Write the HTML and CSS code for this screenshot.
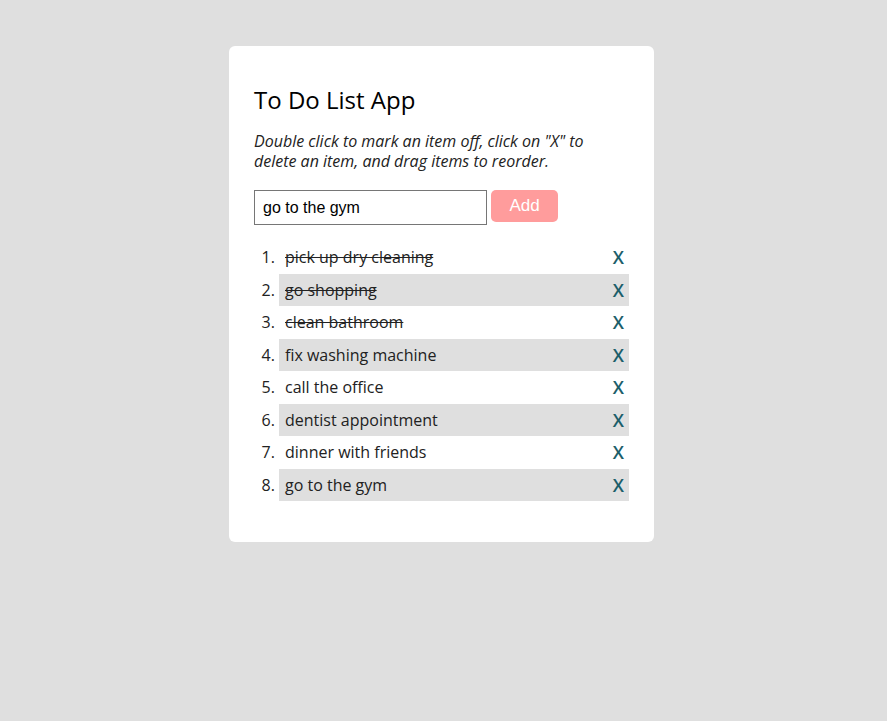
FILE: index.html
```html
<!DOCTYPE html>
<html>
<head>
<meta charset="utf-8">
<link rel="stylesheet" href="styles.css">
</head>
<body>
<div class="card">
  <h2 class="title">To Do List App</h2>
  <p class="desc">Double click to mark an item off, click on "X" to delete an item, and drag items to reorder.</p>
  <div class="form">
    <input class="field" type="text" value="go to the gym">
    <button class="add">Add</button>
  </div>
  <ol class="list">
    <li class="item"><div class="row"><span class="text done">pick up dry cleaning</span><span class="del">X</span></div></li>
    <li class="item"><div class="row"><span class="text done">go shopping</span><span class="del">X</span></div></li>
    <li class="item"><div class="row"><span class="text done">clean bathroom</span><span class="del">X</span></div></li>
    <li class="item"><div class="row"><span class="text">fix washing machine</span><span class="del">X</span></div></li>
    <li class="item"><div class="row"><span class="text">call the office</span><span class="del">X</span></div></li>
    <li class="item"><div class="row"><span class="text">dentist appointment</span><span class="del">X</span></div></li>
    <li class="item"><div class="row"><span class="text">dinner with friends</span><span class="del">X</span></div></li>
    <li class="item"><div class="row"><span class="text">go to the gym</span><span class="del">X</span></div></li>
  </ol>
</div>
</body>
</html>
```
FILE: styles.css
```css
html, body {
  margin: 0;
  padding: 0;
  background: #dfdfdf;
}
body {
  font-family: "Open Sans", sans-serif;
  color: #222;
  padding-top: 46px;
}
.card {
  width: 375px;
  margin: 0 0 0 229px;
  background: #fff;
  border-radius: 6px;
  padding: 25px;
}
.title {
  font-size: 24px;
  font-weight: 500;
  color: #000;
  margin: 12px 0 15px;
  line-height: 33px;
}
.desc {
  font-style: italic;
  font-size: 16px;
  line-height: 20px;
  margin: 0 0 19px;
  color: #222;
}
.form {
  display: flex;
  align-items: flex-start;
  gap: 4px;
}
.field {
  box-sizing: border-box;
  width: 233px;
  height: 35px;
  border: 1px solid #767676;
  padding: 0 8px;
  font-family: "Liberation Sans", Arial, sans-serif;
  font-size: 16px;
  color: #000;
  margin: 0;
}
.add {
  box-sizing: border-box;
  width: 67px;
  height: 32px;
  border: none;
  border-radius: 5px;
  background: #ff9c9c;
  color: #fff;
  font-family: "Liberation Sans", Arial, sans-serif;
  font-size: 17px;
  margin: 0;
}
.list {
  margin: 16px 0 16px;
  padding-left: 25px;
  font-size: 16px;
}
.item {
  height: 32.5px;
  line-height: 32.5px;
}
.item::marker {
  color: #222;
}
.item:nth-child(even) {
  background: #dfdfdf;
}
.row {
  display: flex;
  justify-content: space-between;
  align-items: center;
  height: 32.5px;
  padding: 0 6px;
}
.done {
  text-decoration: line-through;
}
.del {
  color: #1b5e6a;
  font-size: 18px;
  font-weight: 600;
  margin-right: -1px;
}
```
